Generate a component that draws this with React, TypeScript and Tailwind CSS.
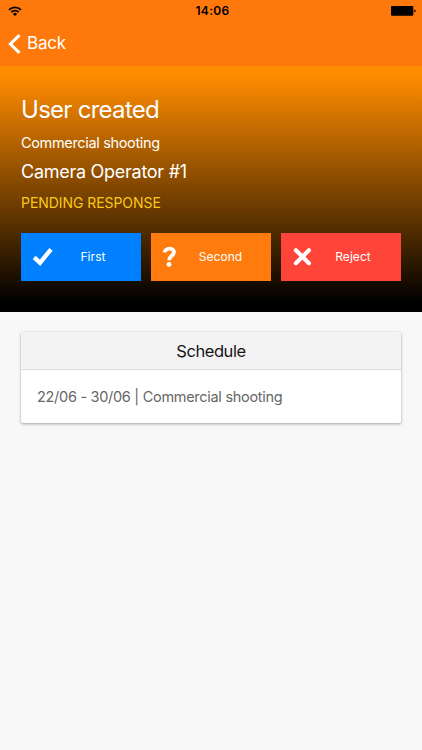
import React from "react";

function StatusBar() {
  return (
    <div className="flex h-[21px] items-center justify-between pl-[8px] pr-[6px] text-black">
      <svg width="14" height="10" viewBox="0 0 14 10" fill="none" stroke="currentColor" strokeWidth="1.7">
        <path d="M1 3.9A8.6 8.6 0 0 1 13 3.9" />
        <path d="M3.2 6.2A5.4 5.4 0 0 1 10.8 6.2" />
        <path d="M7 10 4.9 7.9A3 3 0 0 1 9.1 7.9Z" fill="currentColor" stroke="none" />
      </svg>
      <span className="ml-[12px] text-[12px] font-semibold leading-none tracking-[0.35px]">14:06</span>
      <svg width="25" height="10" viewBox="0 0 25 10" fill="currentColor">
        <rect x="0" y="0" width="22.3" height="9.8" rx="1" />
        <path d="M23.2 3.5q1.5.2 1.5 1.4t-1.5 1.4z" />
      </svg>
    </div>
  );
}

function CheckIcon() {
  return (
    <svg width="22" height="20" viewBox="0 0 22 20" fill="none" stroke="white" strokeWidth="4.3">
      <path d="M2.2 10.4 8 15.8 19 2.3" />
    </svg>
  );
}

function QuestionIcon() {
  return (
    <svg width="17" height="22" viewBox="0 0 17 22" fill="none" stroke="white" strokeWidth="3.8">
      <path d="M2.6 6.4C3 1.7 12 1.2 12 6.3c0 3.4-4.9 3.7-4.9 7.9" />
      <circle cx="7" cy="18.5" r="2.4" fill="white" stroke="none" />
    </svg>
  );
}

function CrossIcon() {
  return (
    <svg width="22" height="20" viewBox="0 0 22 20" fill="none" stroke="white" strokeWidth="4.1" strokeLinecap="round">
      <path d="M3.9 3.2 16.9 16.2M16.9 3.2 3.9 16.2" />
    </svg>
  );
}

function ActionButton({ label, color, icon }: { label: string; color: string; icon: React.ReactNode }) {
  return (
    <button className={`flex h-[48px] flex-1 items-center pl-[11px] pr-[10px] ${color}`}>
      {icon}
      <span className="flex-1 pl-[1px] text-center text-[12px] leading-[20px] tracking-[0.05px]">{label}</span>
    </button>
  );
}

export default function App() {
  return (
    <div className="min-h-screen bg-[#f8f8f8] font-['Inter','Liberation_Sans',sans-serif] text-white">
      <header className="h-[66px] bg-[#ff780b]">
        <StatusBar />
        <button className="flex h-[45px] items-center pl-[8px]">
          <svg width="13" height="20" viewBox="0 0 13 20" fill="none" stroke="white" strokeWidth="3.1">
            <path d="M11.5 1.2 2.4 10l9.1 8.8" />
          </svg>
          <span className="ml-[6px] text-[17px] leading-[19px] tracking-[-0.2px]">Back</span>
        </button>
      </header>
      <section className="h-[246px] bg-[linear-gradient(#ff8c00_0%,#ff8c00_4%,#000_96%)] px-[21px] pt-[28px]">
        <h1 className="h-[34px] whitespace-nowrap text-[24px] leading-[32px] tracking-[-0.72px]">User created</h1>
        <p className="mt-[5px] h-[20px] whitespace-nowrap text-[14.5px] leading-[20px] tracking-[-0.34px]">Commercial shooting</p>
        <h2 className="mt-[7px] h-[24px] whitespace-nowrap text-[18px] leading-[24px] tracking-[-0.27px]">Camera Operator #1</h2>
        <p className="mt-[9px] h-[20px] whitespace-nowrap text-[14px] leading-[20px] tracking-[-0.06px] text-[#fbc81b]">PENDING RESPONSE</p>
        <div className="mt-[20px] flex gap-[10px]">
          <ActionButton label="First" color="bg-[#0080ff]" icon={<CheckIcon />} />
          <ActionButton label="Second" color="bg-[#ff7b0d]" icon={<QuestionIcon />} />
          <ActionButton label="Reject" color="bg-[#ff453a]" icon={<CrossIcon />} />
        </div>
      </section>
      <section className="mx-[21px] mt-[20px] overflow-hidden rounded-[2px] bg-white shadow-[0_1px_3px_rgba(0,0,0,0.35)]">
        <h3 className="h-[38px] border-b border-[#dcdcdc] bg-[#f3f3f3] text-center text-[16.5px] leading-[38px] tracking-[-0.45px] text-[#151515]">Schedule</h3>
        <p className="h-[53px] whitespace-nowrap pl-[16px] text-[14.5px] leading-[53px] tracking-[-0.29px] text-[#666]">22/06 - 30/06 | Commercial shooting</p>
      </section>
    </div>
  );
}
